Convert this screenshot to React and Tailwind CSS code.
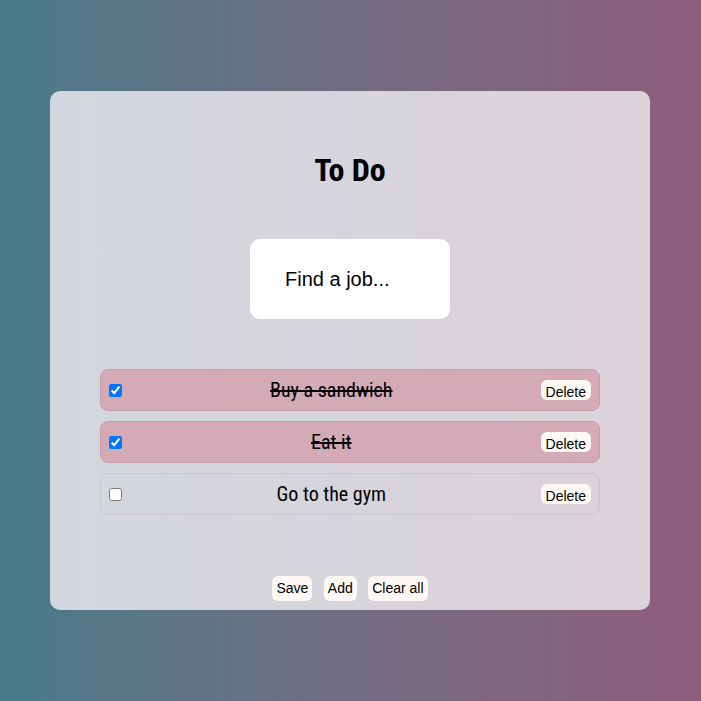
import React, { useState } from 'react';

const initialTodos = [
  { id: 1, text: 'Buy a sandwich', done: true },
  { id: 2, text: 'Eat it', done: true },
  { id: 3, text: 'Go to the gym', done: false },
];

function TodoItem({ todo, onToggle, onDelete }) {
  return (
    <li
      className={`flex items-center h-[42px] pl-[4px] pr-[8px] rounded-lg border ${
        todo.done ? 'bg-[#d4aab7] border-[#c69dac]' : 'border-[#c9c6cd]'
      }`}
    >
      <input
        type="checkbox"
        checked={todo.done}
        onChange={() => onToggle(todo.id)}
        className="w-[13px] h-[13px] ml-[4px]"
      />
      <span
        className={`flex-1 text-center text-[20px] text-black font-['Roboto_Condensed','Roboto',sans-serif] [font-stretch:condensed] ${
          todo.done ? 'line-through decoration-2' : ''
        }`}
      >
        {todo.text}
      </span>
      <button
        onClick={() => onDelete(todo.id)}
        className="h-[20px] px-[5px] pt-[3px] rounded-md bg-[#fff8f5] text-[14px] leading-none text-black font-['Liberation_Sans',Arial,sans-serif]"
      >
        Delete
      </button>
    </li>
  );
}

export default function App() {
  const [todos, setTodos] = useState(initialTodos);
  const [draft, setDraft] = useState('');

  const toggle = (id) => setTodos(todos.map((t) => (t.id === id ? { ...t, done: !t.done } : t)));
  const remove = (id) => setTodos(todos.filter((t) => t.id !== id));
  const add = () => {
    if (!draft.trim()) return;
    setTodos([...todos, { id: Date.now(), text: draft, done: false }]);
    setDraft('');
  };

  return (
    <div className="w-full min-h-screen h-[701px] flex pl-[50px] pt-[91px] bg-gradient-to-r from-[#477b8b] to-[#8f5d7b]">
      <div className="w-[600px] h-[519px] rounded-[10px] bg-gradient-to-r from-[#d2d7de] to-[#dcd2da] flex flex-col items-center pt-[55px] pb-[9px]">
        <h1 className="text-[32px] leading-none font-bold text-black font-['Roboto_Condensed','Roboto',sans-serif] [font-stretch:condensed] h-[48px] flex items-center">
          To Do
        </h1>

        <input
          value={draft}
          onChange={(e) => setDraft(e.target.value)}
          placeholder="Find a job..."
          className="mt-[45px] w-[200px] h-[80px] rounded-[10px] bg-white pl-[35px] text-[20px] text-black placeholder:text-black outline-none font-['Liberation_Sans',Arial,sans-serif]"
        />

        <ul className="mt-[50px] w-[500px] flex flex-col gap-[10px]">
          {todos.map((t) => (
            <TodoItem key={t.id} todo={t} onToggle={toggle} onDelete={remove} />
          ))}
        </ul>

        <div className="mt-auto flex gap-[11.5px] font-['Liberation_Sans',Arial,sans-serif] text-[14px] text-black">
          <button className="h-[25px] px-[4px] rounded-md bg-[#fff8f5]">Save</button>
          <button onClick={add} className="h-[25px] px-[4px] rounded-md bg-[#fff8f5]">Add</button>
          <button onClick={() => setTodos([])} className="h-[25px] px-[4px] rounded-md bg-[#fff8f5]">Clear all</button>
        </div>
      </div>
    </div>
  );
}
